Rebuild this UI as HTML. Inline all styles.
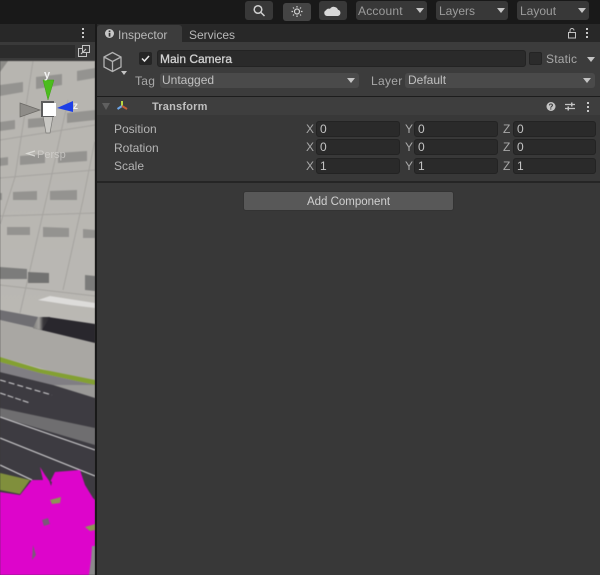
<!DOCTYPE html>
<html><head><meta charset="utf-8"><style>
html,body{margin:0;padding:0;width:600px;height:575px;overflow:hidden;background:#383838}
body{position:relative;font-family:"Liberation Sans",sans-serif;font-size:12px;color:#bdbdbd;filter:blur(.3px)}
div{position:absolute;box-sizing:border-box}
.t{white-space:nowrap;line-height:14px;height:14px}
.btn{background:#383838;border-radius:3px;height:19px;top:1px}
.dd{background:#4a4a4a;border-radius:3px}
.f{background:#2a2a2a;border-radius:3px;height:16px;border:1px solid #232323;color:#c4c4c4;padding-left:3px;line-height:14px}
.arr{width:0;height:0;border-left:4px solid transparent;border-right:4px solid transparent;border-top:5px solid #c4c4c4}
.ax{color:#a8a8a8}
svg{position:absolute;overflow:visible}
</style></head><body>
<div style="left:0;top:0;width:600px;height:24px;background:#191919"></div>
<div class="btn" style="left:245px;width:28px;background:#383838"></div>
<svg style="left:245px;top:1px" width="28" height="19" fill="none" stroke="#d0d0d0" stroke-width="1.5"><circle cx="13" cy="8.500" r="3.800"/><path d="M16 11.500L19.500 15"/></svg>
<div class="btn" style="left:283px;top:3px;width:28px;background:#444;height:18px"></div>
<svg style="left:283px;top:2px" width="28" height="19" fill="none" stroke="#d0d0d0"><circle cx="14" cy="9.500" r="2.500" stroke-width="1.200"/><path d="M14 4v1.500M14 13.500v1.500M8.500 9.500H10M18 9.500h1.500M10 5.500l1 1M17 12.500l1 1M18 5.500l-1 1M11 12.500l-1 1" stroke-width="1.200"/></svg>
<div class="btn" style="left:319px;width:28px"></div>
<svg style="left:319px;top:1px" width="28" height="19"><path d="M8 15a3 3 0 0 1-1-5.700a3.200 3.200 0 0 1 4-1.500a4.500 4.500 0 0 1 8 1a3.200 3.200 0 0 1 0 6.200z" fill="#d8d8d8"/></svg>
<div class="btn" style="left:356px;width:71px"></div><div class="t" style="left:358px;top:4px;color:#9c9c9c;letter-spacing:.2px">Account</div><div class="arr" style="left:416px;top:8px"></div>
<div class="btn" style="left:436px;width:72px"></div><div class="t" style="left:439px;top:4px;color:#9c9c9c">Layers</div><div class="arr" style="left:497px;top:8px"></div>
<div class="btn" style="left:517px;width:72px"></div><div class="t" style="left:520px;top:4px;color:#9c9c9c">Layout</div><div class="arr" style="left:578px;top:8px"></div>

<!-- left panel -->
<div style="left:0;top:24px;width:95px;height:18px;background:#282828"></div>
<div style="left:82px;top:28px;width:2px;height:2px;background:#c8c8c8;box-shadow:0 4px #c8c8c8,0 8px #c8c8c8"></div>
<div style="left:0;top:42px;width:95px;height:19px;background:#3a3a3a"></div>
<div style="left:0;top:45px;width:75px;height:13px;background:#2c2c2c"></div>
<svg style="left:78px;top:45px" width="12" height="12" fill="none" stroke="#c4c4c4"><rect x="0.500" y="3.500" width="8" height="8"/><rect x="4.500" y="0.500" width="7" height="7" fill="#3a3a3a"/><path d="M3 9L8 4" stroke-width="1.200"/></svg>

<!-- scene -->
<svg style="left:0;top:61px;filter:blur(.6px)" width="95" height="514" viewBox="0 61 95 514">
<defs>
<linearGradient id="w" x1="0" y1="0" x2="0" y2="1"><stop offset="0" stop-color="#b7b5b0"/><stop offset="1" stop-color="#bbb9b5"/></linearGradient>
<linearGradient id="d" x1="0" y1="0" x2="1" y2="0"><stop offset="0" stop-color="#7e7d7b"/><stop offset=".35" stop-color="#a4a29e"/><stop offset=".6" stop-color="#3a383c"/><stop offset="1" stop-color="#29272d"/></linearGradient>
</defs>
<rect x="0" y="61" width="95" height="340" fill="url(#w)"/>
<path d="M0 61h8L0 72z" fill="#8d8c88"/>
<g stroke="#a5a39f" stroke-width="1" fill="none">
<path d="M33 61L15 177L0 225M68 100L50 183L20 313M95 140L83 200L63 290M0 140L95 125M0 178L95 170M0 216L95 213M0 285L95 296"/>
</g>
<g fill="#949390">
<path d="M0 85L23 82V92L0 96z"/><path d="M36 77L62 74V85L36 89z"/><path d="M77 71L95 68V78L77 81z"/>
<path d="M0 122L15 120V129L0 131z"/><path d="M28 119L50 117V126L28 128z"/><path d="M67 113L95 110V120L67 123z"/>
<path d="M0 158L8 157V165L0 166z"/><path d="M20 156L45 154V163L20 165z"/><path d="M58 153L87 151V161L58 163z"/>
<path d="M0 193L2 193V200L0 200z"/><path d="M13 192L37 191V200L13 200z"/><path d="M50 191L77 190V200L50 200z"/>
<path d="M7 227L30 227V235L7 235z"/><path d="M43 227L69 228V237L43 237z"/><path d="M83 229L95 230V238L83 238z"/>
</g>
<path d="M0 267L27 269L27 279L0 279z" fill="#7c7c7b"/><path d="M28 272L49 273L49 283L28 283z" fill="#727271"/>
<path d="M85 275L95 276V291L85 290z" fill="#7b7b7a"/>
<path d="M38 300L50 296L95 303V308L70 305z" fill="#dddcda"/>
<path d="M0 310L38 317L35 328L0 320z" fill="#6f6e72"/>
<path d="M0 320L33 328L95 343V385L40 368L0 357z" fill="#a9a7a3"/>
<path d="M33 328L48 317L95 324V343z" fill="#29272d"/>
<path d="M33 328L38 317L50 317L42 330z" fill="url(#d)"/>
<path d="M0 357L40 369L95 380V385L40 373L0 362z" fill="#83a032"/>
<path d="M0 362L40 373L95 385V398L53 385L0 372z" fill="#807e83"/>
<path d="M53 385L95 385V398z" fill="#9a9997"/>
<path d="M0 372L53 385L95 398V575H0z" fill="#3d3b41"/>
<path d="M0 408L95 428V445L0 417z" fill="#6f6e70"/>
<g stroke="#d3d2d4" fill="none">
<path d="M0 380L52 395" stroke-dasharray="6 3"/>
<path d="M0 393L30 403" stroke-dasharray="6 2"/>
<path d="M0 417L95 450" stroke-width="1"/>
<path d="M0 438L95 476" stroke-width="1.200"/>
<path d="M0 465L32 480" stroke-width="1.200"/>
</g>
<path d="M0 473L30 480L20 494L0 490z" fill="#808f3c"/>
<path d="M0 492L20 495L32 480L43 480L40 467L45 475L50 482L55 472L80 470L85 485L93 498L95 500V575H0z" fill="#dd05cb"/>
<path d="M50 500L61 497L60 503L52 504zM85 527L95 524V530L90 531z" fill="#8c9555"/>
<path d="M92 546L95 546V575L89 575L91 560z" fill="#8a8a8a"/>
<path d="M49 480L52 482L51 486z" fill="#3d3b41"/>
<path d="M42 520L48 518L50 524L44 526zM33 545L36 555L32 560z" fill="#7a5a78"/>
</svg>

<!-- gizmo -->
<svg style="left:0;top:61px" width="95" height="110">
<path d="M20 42L40 49L20 56z" fill="#8e8c88" stroke="#6a6864" stroke-width=".7"/>
<path d="M46 72L50 72L53 55H43z" fill="#c9c8c4" stroke="#7a7976" stroke-width=".7"/>
<path d="M43 19H54L48 39z" fill="#4bbd1c" stroke="#3f9f15" stroke-width=".5"/>
<path d="M73 40L73 51L57 47z" fill="#1d3fe6"/>
<path d="M41 40H54V56H41z" fill="#5c5c5c"/>
<rect x="43" y="42" width="13" height="13" fill="#fff"/>
<text x="44" y="17" fill="#f2f2f2" font-family="Liberation Sans" font-size="11" font-weight="bold">y</text>
<text x="73" y="48" fill="#f2f2f2" font-family="Liberation Sans" font-size="10" font-weight="bold">z</text>
<text x="37" y="97" fill="#dedcd9" font-family="Liberation Sans" font-size="11" opacity=".6">Persp</text>
<path d="M35 95L27 92.500L35 90" fill="none" stroke="#e4e3e0" stroke-width="1.200" opacity=".8"/>
</svg>

<div style="left:95px;top:24px;width:2px;height:551px;background:#191919"></div>

<!-- right panel -->
<div style="left:97px;top:24px;width:503px;height:18px;background:#282828"></div>
<div style="left:97px;top:25px;width:85px;height:17px;background:#3c3c3c;border-radius:3px 3px 0 0"></div>
<svg style="left:105px;top:29px" width="10" height="10"><circle cx="4.500" cy="4.500" r="4.500" fill="#c8c8c8"/><rect x="3.700" y="1.500" width="1.700" height="1.500" fill="#333"/><rect x="3.700" y="3.800" width="1.700" height="3.800" fill="#333"/></svg>
<div class="t" style="left:118px;top:27.500px;color:#b8b8b8">Inspector</div>
<div class="t" style="left:189px;top:27.500px;color:#b8b8b8">Services</div>
<svg style="left:567px;top:27px" width="12" height="12" fill="none" stroke="#c4c4c4"><rect x="1.500" y="5.500" width="7" height="5.500"/><path d="M3 5V3.500a2 2 0 0 1 4 0"/></svg>
<div style="left:586px;top:28px;width:2px;height:2px;background:#c8c8c8;box-shadow:0 4px #c8c8c8,0 8px #c8c8c8"></div>

<div style="left:97px;top:42px;width:503px;height:54px;background:#3c3c3c"></div>
<svg style="left:102px;top:51px" width="26" height="26" fill="none" stroke="#b2b2b2" stroke-width="1.300"><path d="M2 6L10.500 1.500L19 6V16L10.500 20.500L2 16zM2 6L10.500 10.500L19 6M10.500 10.500V20.500"/></svg>
<div class="arr" style="left:120.500px;top:71px;border-left-width:3.500px;border-right-width:3.500px;border-top-width:4px"></div>
<div style="left:139px;top:52px;width:13px;height:13px;background:#252525;border-radius:2px"></div>
<svg style="left:139px;top:52px" width="13" height="13" fill="none" stroke="#e6e6e6" stroke-width="1.500"><path d="M3 6.500L5.500 9L10 4"/></svg>
<div class="f" style="left:157px;top:50px;width:369px;height:17px;color:#d0d0d0;font-weight:normal;padding-left:2px;line-height:17px;-webkit-text-stroke:.3px #d0d0d0">Main Camera</div>
<div style="left:529px;top:52px;width:13px;height:13px;background:#2b2b2b;border:1px solid #242424;border-radius:2px"></div>
<div class="t" style="left:546px;top:52px;color:#a8a8a8;letter-spacing:.2px">Static</div>
<div class="arr" style="left:587px;top:57px"></div>
<div class="t" style="left:135px;top:74px;color:#a8a8a8;letter-spacing:.3px">Tag</div>
<div class="dd" style="left:160px;top:73px;width:199px;height:15px"></div>
<div class="t" style="left:162px;top:73px;color:#c0c0c0">Untagged</div>
<div class="arr" style="left:347px;top:78px"></div>
<div class="t" style="left:371px;top:74px;color:#a8a8a8;letter-spacing:.3px">Layer</div>
<div class="dd" style="left:405px;top:73px;width:190px;height:15px"></div>
<div class="t" style="left:408px;top:73px;color:#c0c0c0">Default</div>
<div class="arr" style="left:583px;top:78px"></div>

<div style="left:97px;top:96px;width:503px;height:1px;background:#1d1d1d"></div>
<div style="left:97px;top:97px;width:503px;height:18px;background:#3e3e3e"></div>
<div style="left:102px;top:103px;width:0;height:0;border-left:4.500px solid transparent;border-right:4.500px solid transparent;border-top:7px solid #5f5f5f"></div>
<svg style="left:116px;top:100px" width="14" height="14" fill="none" stroke-width="2"><path d="M6 1V6" stroke="#b8d840"/><path d="M6 6L1.500 9" stroke="#6da6e8"/><path d="M6 6L11 9" stroke="#c25f38"/></svg>
<div class="t" style="left:152px;top:100px;color:#c0c0c0;font-size:11px;font-weight:bold;letter-spacing:.2px">Transform</div>
<svg style="left:546px;top:101px" width="40" height="12"><circle cx="5" cy="5.500" r="4.500" fill="#c4c4c4"/><text x="5" y="8.500" text-anchor="middle" font-size="8" font-weight="bold" fill="#333" font-family="Liberation Sans">?</text><path d="M19 3.500h10M19 7.500h10" stroke="#c4c4c4" stroke-width="1.200"/><rect x="25" y="1.500" width="1.500" height="4" fill="#c4c4c4"/><rect x="21.500" y="5.500" width="1.500" height="4" fill="#c4c4c4"/></svg>
<div style="left:587px;top:102px;width:2px;height:2px;background:#c8c8c8;box-shadow:0 4px #c8c8c8,0 8px #c8c8c8"></div>

<div class="t" style="left:114px;top:122px;color:#b4b4b4">Position</div>
<div class="t" style="left:114px;top:140.500px;color:#b4b4b4">Rotation</div>
<div class="t" style="left:114px;top:158.500px;color:#b4b4b4">Scale</div>

<div class="t ax" style="left:306px;top:122px">X</div><div class="f" style="left:316px;top:121px;width:84px">0</div>
<div class="t ax" style="left:405px;top:122px">Y</div><div class="f" style="left:414px;top:121px;width:84px">0</div>
<div class="t ax" style="left:503px;top:122px">Z</div><div class="f" style="left:513px;top:121px;width:83px">0</div>
<div class="t ax" style="left:306px;top:140px">X</div><div class="f" style="left:316px;top:139px;width:84px">0</div>
<div class="t ax" style="left:405px;top:140px">Y</div><div class="f" style="left:414px;top:139px;width:84px">0</div>
<div class="t ax" style="left:503px;top:140px">Z</div><div class="f" style="left:513px;top:139px;width:83px">0</div>
<div class="t ax" style="left:306px;top:158.500px">X</div><div class="f" style="left:316px;top:157.500px;width:84px">1</div>
<div class="t ax" style="left:405px;top:158.500px">Y</div><div class="f" style="left:414px;top:157.500px;width:84px">1</div>
<div class="t ax" style="left:503px;top:158.500px">Z</div><div class="f" style="left:513px;top:157.500px;width:83px">1</div>

<div style="left:97px;top:181px;width:503px;height:2px;background:#252525"></div>
<div style="left:243px;top:191px;width:211px;height:20px;background:#585858;border-radius:3px;border:1px solid #333;color:#d0d0d0;text-align:center;line-height:20px;font-size:11.500px">Add Component</div>
</body></html>
